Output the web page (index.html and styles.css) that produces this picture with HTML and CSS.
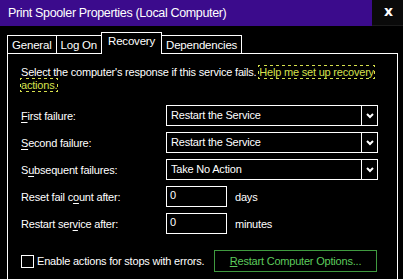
FILE: index.html
```html
<!DOCTYPE html>
<html>
<head>
<meta charset="utf-8">
<link rel="stylesheet" href="styles.css">
</head>
<body>
<div class="window">
  <div class="titlebar">
    <div class="title">Print Spooler Properties (Local Computer)</div>
    <div class="close">x</div>
  </div>
  <div class="tabs">
    <div class="tab">General</div>
    <div class="tab">Log On</div>
    <div class="tab active">Recovery</div>
    <div class="tab">Dependencies</div>
  </div>
  <div class="panel">
    <p class="desc">Select the computer's response if this service fails. <a class="link">Help me set up recovery actions.</a></p>
    <div class="form">
      <div class="row">
        <label class="lbl"><u>F</u>irst failure:</label>
        <div class="select"><span class="val">Restart the Service</span><span class="arrow"><svg width="8" height="6" viewBox="0 0 8 6"><polyline points="1,1 4,4 7,1" fill="none" stroke="#fff" stroke-width="2"/></svg></span></div>
      </div>
      <div class="row">
        <label class="lbl"><u>S</u>econd failure:</label>
        <div class="select"><span class="val">Restart the Service</span><span class="arrow"><svg width="8" height="6" viewBox="0 0 8 6"><polyline points="1,1 4,4 7,1" fill="none" stroke="#fff" stroke-width="2"/></svg></span></div>
      </div>
      <div class="row">
        <label class="lbl">S<u>u</u>bsequent failures:</label>
        <div class="select"><span class="val">Take No Action</span><span class="arrow"><svg width="8" height="6" viewBox="0 0 8 6"><polyline points="1,1 4,4 7,1" fill="none" stroke="#fff" stroke-width="2"/></svg></span></div>
      </div>
      <div class="row">
        <label class="lbl">Reset fail c<u>o</u>unt after:</label>
        <div class="input">0</div>
        <span class="unit">days</span>
      </div>
      <div class="row">
        <label class="lbl">Restart ser<u>v</u>ice after:</label>
        <div class="input">0</div>
        <span class="unit">minutes</span>
      </div>
    </div>
    <div class="bottom">
      <label class="check"><span class="box"></span>Enable actions for stops with errors.</label>
      <div class="button"><u>R</u>estart Computer Options...</div>
    </div>
  </div>
</div>
</body>
</html>
```

FILE: styles.css
```css
html, body {
  margin: 0;
  padding: 0;
  background: #000;
}
body {
  width: 403px;
  height: 279px;
  overflow: hidden;
  font-family: "Liberation Sans", Arial, sans-serif;
  font-size: 11px;
  letter-spacing: -0.2px;
  color: #fff;
}
.titlebar {
  display: flex;
  height: 26px;
}
.title {
  flex: 0 0 364px;
  background: #3b0b8c;
  padding-left: 8px;
  line-height: 26px;
  font-family: "Liberation Sans", sans-serif;
  font-size: 12.5px;
  letter-spacing: -0.35px;
  color: #fff;
}
.close {
  flex: 1;
  background: #0a0a0a;
  border-bottom: 1px solid #1c1c1c;
  box-sizing: border-box;
  text-align: center;
  font-family: "DejaVu Sans", sans-serif;
  font-weight: bold;
  font-size: 14px;
  line-height: 22px;
  padding-left: 2px;
  letter-spacing: 0;
}
.tabs {
  display: flex;
  align-items: flex-end;
  height: 27px;
  padding-left: 8px;
  position: relative;
  z-index: 1;
}
.tab {
  height: 18px;
  box-sizing: border-box;
  border: 1px solid #fff;
  border-bottom: none;
  margin-left: -1px;
  padding: 0 4px;
  line-height: 18px;
  font-size: 11.5px;
  background: #000;
}
.tab.active {
  height: 22px;
  line-height: 17px;
  padding: 0 6px;
  margin-bottom: -1px;
}
.panel {
  margin-left: 7px;
  width: 391px;
  height: 227px;
  box-sizing: border-box;
  border: 1px solid #fff;
  padding: 12px 0 0 13px;
}
.desc {
  margin: 0;
  width: 362px;
  line-height: 13px;
}
.link {
  color: #d6e04c;
  outline: 1px dotted #d6e04c;
  outline-offset: 0;
}
.form {
  margin-top: 13px;
  display: flex;
  flex-direction: column;
  gap: 6px;
}
.row {
  display: flex;
  align-items: center;
  height: 21px;
}
.lbl {
  flex: 0 0 145px;
}
.lbl u {
  text-underline-offset: 2px;
}
.select {
  display: flex;
  width: 212px;
  height: 21px;
  box-sizing: border-box;
  border: 1px solid #fff;
}
.val {
  flex: 1;
  padding-left: 4px;
  line-height: 19px;
}
.arrow {
  flex: 0 0 15px;
  border-left: 1px solid #fff;
  display: flex;
  align-items: center;
  justify-content: center;
}
.input {
  width: 61px;
  height: 21px;
  box-sizing: border-box;
  border: 1px solid #fff;
  padding-left: 3px;
  line-height: 17px;
}
.unit {
  margin-left: 8px;
}
.bottom {
  display: flex;
  align-items: center;
  margin-top: 16px;
}
.check {
  display: flex;
  align-items: center;
  flex: 0 0 193px;
}
.box {
  width: 13px;
  height: 13px;
  box-sizing: border-box;
  border: 1px solid #fff;
  margin-right: 3px;
}
.button {
  width: 163px;
  height: 22px;
  box-sizing: border-box;
  border: 1px solid #3f9a3f;
  color: #5ccb5c;
  text-align: center;
  line-height: 20px;
}
```
